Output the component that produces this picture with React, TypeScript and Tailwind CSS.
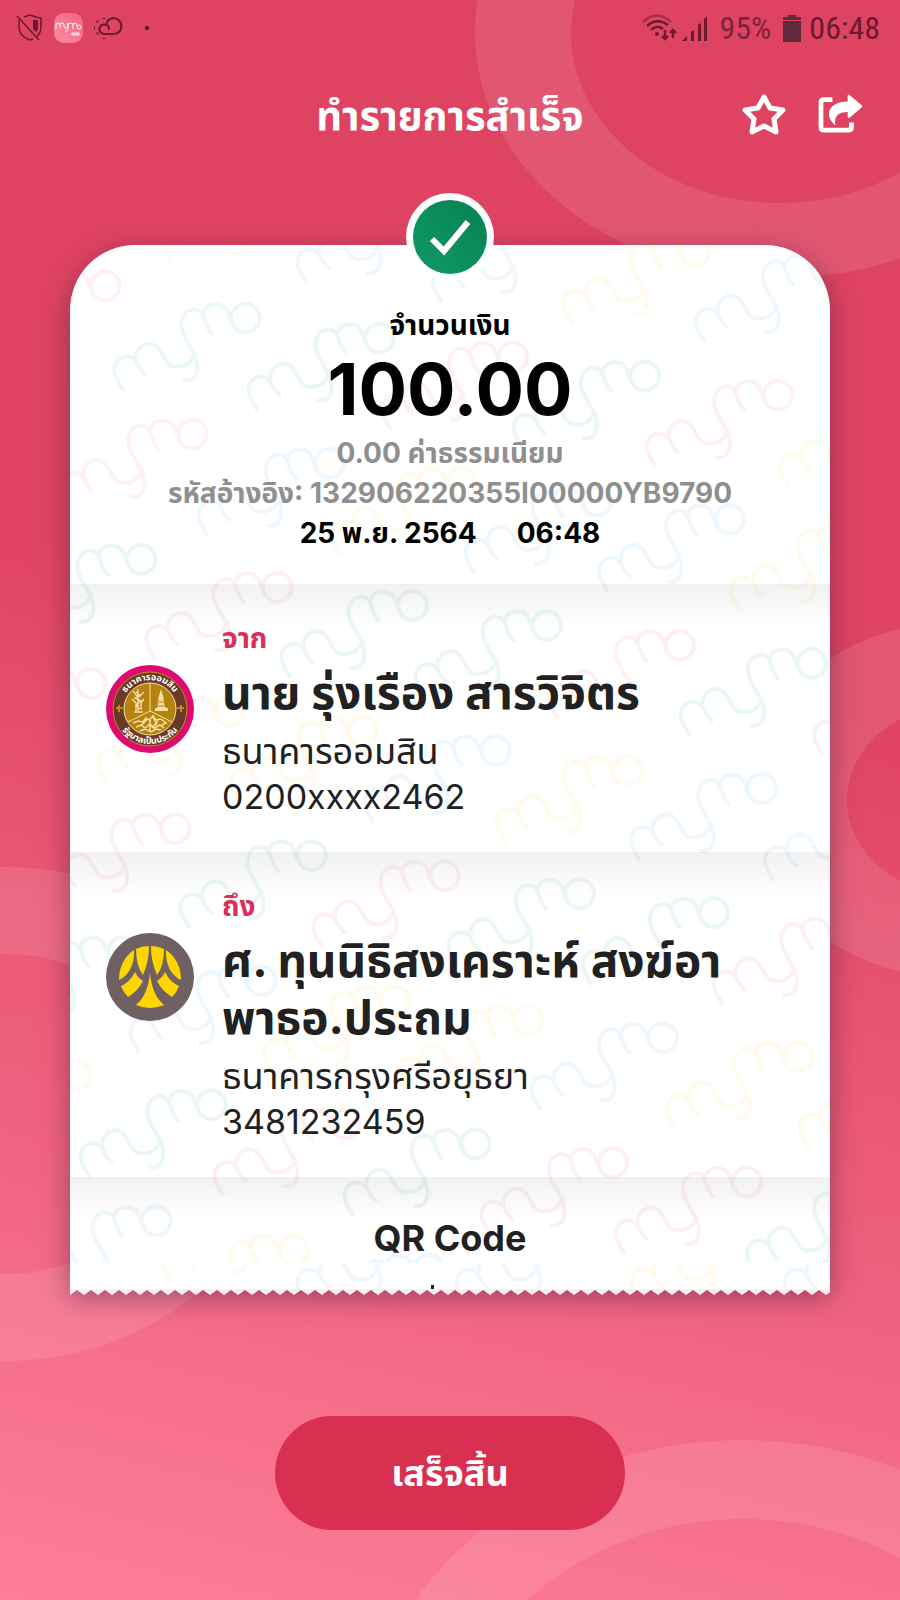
import * as React from 'react';

const GREEN = '#17a57d';
const PINK = '#f0506e';
const BLUE = '#3ba4ea';
const YELLOW = '#ffc420';

type Stamp = [number, number, string];

// x, y, colour of every watermark, in card coordinates
const stamps: Stamp[] = [
    [-97, 26, PINK], [92, -68, YELLOW], [226, -49, BLUE], [361, -30, BLUE], [492, -8, YELLOW], [624, 10, BLUE],
    [43, 58, GREEN], [177, 78, GREEN], [310, 97, PINK], [442, 116, GREEN], [575, 135, PINK], [708, 155, YELLOW],
    [-10, 174, PINK], [127, 203, BLUE], [259, 222, YELLOW], [394, 241, BLUE], [527, 259, BLUE], [659, 279, YELLOW],
    [-61, 299, GREEN], [75, 327, PINK], [210, 345, GREEN], [344, 365, GREEN], [477, 385, PINK], [609, 403, GREEN], [742, 423, PINK],
    [-111, 423, PINK], [27, 451, YELLOW], [160, 471, YELLOW], [293, 490, BLUE], [425, 510, YELLOW], [559, 528, BLUE], [693, 548, BLUE],
    [-27, 568, PINK], [109, 595, GREEN], [242, 615, PINK], [377, 633, GREEN], [511, 652, GREEN], [642, 672, PINK],
    [-80, 691, GREEN], [59, 720, BLUE], [193, 740, YELLOW], [326, 759, YELLOW], [460, 777, BLUE], [595, 796, YELLOW], [728, 815, YELLOW],
    [-126, 814, YELLOW], [9, 844, GREEN], [143, 863, PINK], [273, 883, GREEN], [410, 902, PINK], [544, 921, PINK], [675, 941, GREEN],
    [-46, 960, BLUE], [91, 989, YELLOW], [226, 1008, BLUE],
];

const footerStamps: Stamp[] = [
    [91, 949, YELLOW], [226, 970, BLUE], [385, 970, BLUE], [560, 970, YELLOW], [713, 970, BLUE],
];

const MymoStamp: React.FunctionComponent<{ stamp: Stamp }> = ({ stamp: [x, y, color] }) => (
    <g transform={`translate(${x} ${y}) scale(0.333)`} stroke={color} strokeWidth="12" fill="none" strokeLinecap="round">
        <path d="M30 258 C12 228 -6 202 12 176 C30 153 64 158 74 182 C80 196 86 206 98 215" />
        <path d="M70 170 C68 132 106 110 132 130 C156 150 154 190 190 191 C224 192 238 174 248 152" />
        <path d="M215 232 C252 236 262 200 248 160 C235 128 200 90 207 55 C214 14 262 6 273 42 C280 62 284 78 297 90" />
        <path d="M270 36 C276 -1 322 -6 342 20 C350 32 350 50 362 66" />
        <circle cx="398" cy="45" r="43" />
    </g>
);

const Watermark: React.FunctionComponent = () => (
    <svg
        className="absolute inset-0 w-full h-full opacity-8"
        viewBox="0 0 760 1043"
        preserveAspectRatio="xMidYMin slice"
        aria-hidden="true"
    >
        <clipPath id="body">
            <rect width="760" height="1017" />
        </clipPath>
        <clipPath id="tail">
            <rect y="1018" width="760" height="40" />
        </clipPath>
        <g clipPath="url(#body)">
            {stamps.map((s, i) => <MymoStamp key={i} stamp={s} />)}
        </g>
        <g clipPath="url(#tail)">
            {footerStamps.map((s, i) => <MymoStamp key={i} stamp={s} />)}
        </g>
    </svg>
);

const Rings: React.FunctionComponent = () => (
    <svg
        className="absolute inset-0 w-full h-full"
        viewBox="0 0 900 1600"
        preserveAspectRatio="xMidYMin slice"
        fill="#fff"
        fillOpacity="0.11"
        fillRule="evenodd"
        aria-hidden="true"
    >
        <path d="M475 33 a305 245 0 1 0 610 0 a305 245 0 1 0 -610 0 M571 33 a209 170 0 1 0 418 0 a209 170 0 1 0 -418 0" />
        <path d="M752 800 a198 177 0 1 0 396 0 a198 177 0 1 0 -396 0 M847 800 a103 92 0 1 0 206 0 a103 92 0 1 0 -206 0" />
        <path d="M-274 1114 a279 247 0 1 0 558 0 a279 247 0 1 0 -558 0 M-175 1114 a180 160 0 1 0 360 0 a180 160 0 1 0 -360 0" />
        <path d="M356 1782 a387 342 0 1 0 774 0 a387 342 0 1 0 -774 0 M445 1782 a298 263 0 1 0 596 0 a298 263 0 1 0 -596 0" />
    </svg>
);

const StatusBar: React.FunctionComponent = () => (
    <div className="flex items-center justify-between h-14 pl-4 pr-5 text-[#6b1a30]">
        <div className="flex items-center gap-[10px]">
            <svg width="28" height="30" viewBox="0 0 28 30" fill="none" stroke="currentColor" strokeWidth="1.5">
                <path d="M8 4 L14 2 L20 4 L25 5 V14 C25 19 23 22 20 24 M3 7 V14 C3 21 8 25 14 27 L17 26" />
                <path d="M17 7 H22 V15 C22 17 21 18 20 19 L17 16 Z" fill="currentColor" stroke="none" />
                <path d="M1 3 L23 27" />
            </svg>
            <svg width="29" height="30" viewBox="0 0 29 30" fill="none" stroke="#fff" strokeWidth="1">
                <defs>
                    <linearGradient id="app" x1="0" y1="1" x2="1" y2="0">
                        <stop offset="0" stopColor="#ff8ba3" />
                        <stop offset="1" stopColor="#f3637f" />
                    </linearGradient>
                </defs>
                <rect width="29" height="30" rx="10" fill="url(#app)" stroke="none" />
                <path d="M2 16 V12 Q2 10 4 10 T6 12 V15 M6 12 Q6 10 8 10 T10 12 V14 Q12 17 14 14 V10 V17 Q13 19 11 18 M14 12 Q15 10 17 10 T19 12 V16 M19 12 Q19 10 21 10 T23 13" />
                <circle cx="25" cy="14" r="2" />
                <path d="M18 20 h3 v2 h-3 z M22 20 h3 v2 h-3 z" />
            </svg>
            <svg width="30" height="24" viewBox="0 0 30 24" fill="none" stroke="currentColor" strokeWidth="2.2" strokeLinecap="round">
                <path d="M16 13 C16 8 9 7 7 11 C5 15 8 18 12 18 H21 C31 18 31 2 20 2 C16 3 14 5 14 7" />
                <path d="M1 12 H2 M4 5 L5 6 M11 2 V3 M4 18 L5 17 M11 22 V23" strokeWidth="3" strokeLinecap="butt" />
            </svg>
            <span className="w-1 h-1 ml-3 rounded-full bg-[#35101c]" />
        </div>
        <div className="flex items-center gap-2 text-[32px] leading-8 font-['Roboto_Condensed','Roboto',sans-serif]">
            <svg width="36" height="28" viewBox="0 0 36 28" fill="none" stroke="currentColor" strokeWidth="2.4">
                <path d="M1 8 Q15 -5 29 8" opacity=".5" />
                <path d="M5 12 Q15 3 26 11 M9 16 Q15 10 21 15" />
                <circle cx="15" cy="20" r="2" fill="currentColor" stroke="none" />
                <path d="M23 16 V25 M20 22 L23 25 L26 22 M31 24 V16 M28 19 L31 16 L34 19" />
            </svg>
            <svg className="-ml-1" width="26" height="28" viewBox="0 0 26 28" fill="currentColor">
                <path d="M0 27 L5 22 V27 Z M9 18 L12 16 V27 H9 Z M16 11 L19 9 V27 H16 Z M22 5 L25 2 V27 H22 Z" />
            </svg>
            <span className="mx-1 text-[#7b2340]">95%</span>
            <svg width="18" height="27" viewBox="0 0 18 27" fill="#5f2a3c">
                <path d="M5 0 H13 V2 H18 V5 H0 V2 H5 Z M0 6 H18 V27 H0 Z" />
            </svg>
            <span>06:48</span>
        </div>
    </div>
);

const GsbLogo: React.FunctionComponent = () => (
    <svg className="w-22 h-22 shrink-0" viewBox="0 0 88 88" role="img" aria-label="ธนาคารออมสิน">
        <defs>
            <path id="gsbTop" d="M15 44 A29 29 0 0 1 73 44" />
            <path id="gsbBottom" d="M9 44 A35 35 0 0 0 79 44" />
        </defs>
        <circle cx="44" cy="44" r="44" fill="#de0a70" />
        <circle cx="44" cy="44" r="37" fill="#693a27" stroke="#c78a1c" strokeWidth="1" />
        <circle cx="44" cy="44" r="26" fill="#b5820f" stroke="#f3dfa4" strokeWidth="1" />
        <path d="M44 18 V46 M44 46 L22 57 M44 46 L66 57" stroke="#f3dfa4" fill="none" />
        <g fill="none" stroke="#f3dfa4" strokeWidth="1.4">
            <path d="M32 24 V46 M30 27 L34 30 L29 33 L35 36 L30 40 L34 44 M27 26 L31 31 M38 27 L33 32 M26 34 L30 38 V46 M38 34 L35 38 V45 M28 47 H37" />
        </g>
        <path d="M55 24 l3 10 h-1 l2 4 h-1 l2 5 h2 v3 H49 v-3 h2 l1 -5 h-1 l2 -4 h-1 z" fill="#f3dfa4" />
        <path d="M51 37 h8 M50 41 h10" stroke="#b5820f" />
        <path d="M27 58 l5 -2 5 1 3 -4 3 2 4 -4 3 4 5 -1 5 4 -4 2 M30 62 l5 -2 4 3 5 -4 4 4 6 -3 4 3 M34 66 l5 -2 6 3 5 -3 5 1 M41 54 l-5 6 M47 52 l4 8 M44 55 v12 M52 56 l-6 7" fill="none" stroke="#f3dfa4" strokeWidth="1.5" />
        <path d="M13 40 v7 M10 43 h7 M75 40 v7 M71 43 h7" stroke="#c78a1c" strokeWidth="2" />
        <g fill="#fff" fontSize="9" fontWeight="700" textAnchor="middle">
            <text><textPath href="#gsbTop" startOffset="50%">ธนาคารออมสิน</textPath></text>
            <text><textPath href="#gsbBottom" startOffset="50%">รัฐบาลเป็นประกัน</textPath></text>
        </g>
    </svg>
);

const KrungsriLogo: React.FunctionComponent = () => (
    <svg className="w-22 h-22 shrink-0" viewBox="0 0 88 88" role="img" aria-label="ธนาคารกรุงศรีอยุธยา">
        <circle cx="44" cy="44" r="44" fill="#6f6062" />
        <g fill="#ffd500">
            <path d="M13 47 C13 34 18 24 28 17 C29 32 22 43 13 47 Z" />
            <path d="M75 47 C75 34 70 24 60 17 C59 32 66 43 75 47 Z" />
            <path d="M30 16 Q36 13 43 13 Q43 29 37 42 Q30 33 30 16 Z" />
            <path d="M58 16 Q52 13 45 13 Q45 29 51 42 Q58 33 58 16 Z" />
            <path d="M29 39 Q32 45 37 48 Q32 58 22 64 Q17 59 15 53 Q24 49 29 39 Z" />
            <path d="M59 39 Q56 45 51 48 Q56 58 66 64 Q71 59 73 53 Q64 49 59 39 Z" />
            <path d="M44 40 Q46 62 58 72 Q44 78 30 72 Q42 62 44 40 Z" />
        </g>
    </svg>
);

interface IPartyProps {
    label: string;
    name: string;
    bank: string;
    account: string;
    logo: React.ReactNode;
}

const Party: React.FunctionComponent<IPartyProps> = ({ label, name, bank, account, logo }) => (
    <section className="relative flex gap-7 pl-9 pr-20 pt-9 pb-[33px] bg-[linear-gradient(#0000000e,#00000000_44px)]">
        <div className="pt-[45px]">{logo}</div>
        <div className="text-[#212121]">
            <p className="text-[28px] leading-9 font-bold text-[#d8305a]">{label}</p>
            <h2 className="mt-2 text-[46px] leading-[57px] font-bold">{name}</h2>
            <p className="mt-2 text-[36px] leading-[45px]">{bank}</p>
            <p className="text-[34px] leading-[45px]">{account}</p>
        </div>
    </section>
);

const App: React.FunctionComponent = () => {
    const [isFavorite, setIsFavorite] = React.useState(false);

    return (
        <div className="relative min-h-screen overflow-hidden bg-[linear-gradient(193deg,#de4361_0%,#df4462_40%,#f16582_76%,#fe7e98_100%)] font-['Inter','Noto_Sans_Thai','Noto_Sans',sans-serif]">
            <Rings />
            <div className="relative">
                <StatusBar />
                <header className="grid grid-cols-[1fr_auto_1fr] items-center h-30 px-9">
                    <span />
                    <h1 className="text-[40px] leading-[60px] font-bold text-white">ทำรายการสำเร็จ</h1>
                    <div className="flex items-center justify-end gap-8 pb-1 text-white">
                        <button type="button" aria-label="รายการโปรด" aria-pressed={isFavorite} onClick={() => setIsFavorite(!isFavorite)}>
                            <svg width="44" height="43" viewBox="0 0 44 43" fill={isFavorite ? 'currentColor' : 'none'} stroke="currentColor" strokeWidth="5" strokeLinejoin="round">
                                <path d="M22 4 L28 15 L41 17 L32 26 L34 39 L22 33 L10 39 L12 26 L3 17 L16 15 Z" />
                            </svg>
                        </button>
                        <button type="button" aria-label="แชร์">
                            <svg width="46" height="40" viewBox="0 0 48 42" fill="currentColor">
                                <path d="M15 6 H6 Q3 6 3 9 V35 Q3 38 6 38 H32 Q35 38 35 35 V30" fill="none" stroke="currentColor" strokeWidth="5" />
                                <path d="M31 2 Q31 0 33 1 L46 12 Q47 13 46 14 L33 25 Q31 26 31 24 V19 C20 19 17 24 18 33 C5 22 12 8 31 8 Z" />
                            </svg>
                        </button>
                    </div>
                </header>

                <main className="mx-[70px] mt-[69px]">
                    <div className="relative rounded-t-[65px] bg-white shadow-[0_8px_28px_rgba(70,30,60,0.5)]">
                        <div className="absolute inset-0 overflow-hidden rounded-t-[65px]">
                            <Watermark />
                        </div>
                        <svg className="absolute -top-[52px] left-1/2 -translate-x-1/2" width="88" height="88" viewBox="0 0 88 88">
                            <defs>
                                <linearGradient id="ok" x1="0" y1="1" x2="1" y2="0">
                                    <stop offset="0" stopColor="#109a68" />
                                    <stop offset="1" stopColor="#078052" />
                                </linearGradient>
                            </defs>
                            <circle cx="44" cy="44" r="44" fill="#fff" />
                            <circle cx="44" cy="44" r="37" fill="url(#ok)" />
                            <path d="M26 46 L38 58 L62 29" fill="none" stroke="#fff" strokeWidth="6" />
                        </svg>

                        <section className="relative h-[339px] pt-[60px] text-center text-[28px] leading-10 font-bold text-black">
                            <p>จำนวนเงิน</p>
                            <p className="text-[72px] leading-[88px]">100.00</p>
                            <p className="text-[#8f8f8f]">0.00 ค่าธรรมเนียม</p>
                            <p className="text-[#8f8f8f]">รหัสอ้างอิง: 132906220355I00000YB9790</p>
                            <p className="flex justify-center gap-10">
                                <span>25 พ.ย. 2564</span>
                                <span>06:48</span>
                            </p>
                        </section>

                        <Party
                            label="จาก"
                            name="นาย รุ่งเรือง สารวิจิตร"
                            bank="ธนาคารออมสิน"
                            account="0200xxxx2462"
                            logo={<GsbLogo />}
                        />
                        <Party
                            label="ถึง"
                            name="ศ. ทุนนิธิสงเคราะห์ สงฆ์อาพาธอ.ประถม"
                            bank="ธนาคารกรุงศรีอยุธยา"
                            account="3481232459"
                            logo={<KrungsriLogo />}
                        />

                        <section className="relative h-28 pt-9 overflow-hidden text-center bg-[linear-gradient(#0000000e,#00000000_44px)]">
                            <h3 className="text-[36px] leading-[50px] font-bold text-[#212121]">QR Code</h3>
                            <span className="absolute bottom-0 left-[361px] w-[3px] h-1 bg-[#212121]" />
                        </section>
                    </div>
                    {/* torn paper edge */}
                    <svg className="relative block w-full h-[6px]" fill="#fff" aria-hidden="true">
                        <pattern id="teeth" width="14" height="6" patternUnits="userSpaceOnUse">
                            <path d="M0 0 H14 V6 L7 1 L0 6 Z" fillOpacity="0.9" />
                        </pattern>
                        <rect width="100%" height="6" fill="url(#teeth)" />
                    </svg>
                </main>

                <div className="flex justify-center pt-[121px] pb-[70px]">
                    <button type="button" className="w-[350px] h-[114px] rounded-full bg-[#d92f51] text-[36px] leading-[54px] font-bold text-white">
                        เสร็จสิ้น
                    </button>
                </div>
            </div>
        </div>
    );
};

export default App;
